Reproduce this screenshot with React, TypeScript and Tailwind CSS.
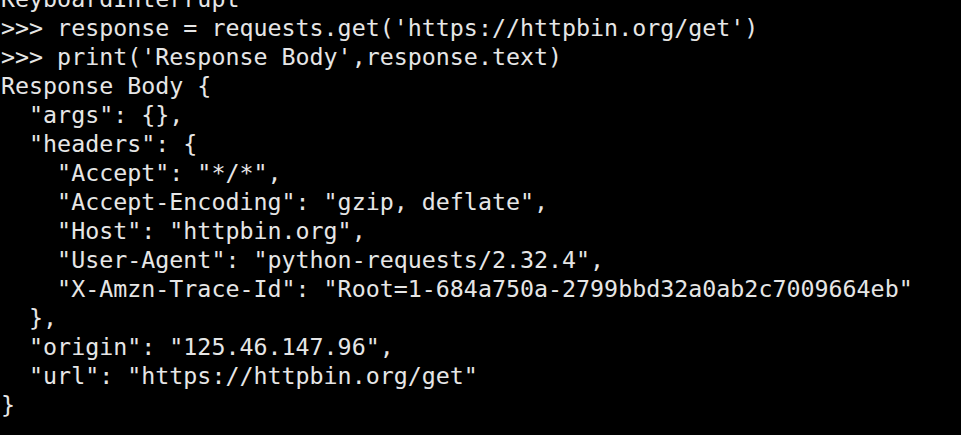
const lines = [
  "KeyboardInterrupt",
  ">>> response = requests.get('https://httpbin.org/get')",
  ">>> print('Response Body',response.text)",
  "Response Body {",
  '  "args": {},',
  '  "headers": {',
  '    "Accept": "*/*",',
  '    "Accept-Encoding": "gzip, deflate",',
  '    "Host": "httpbin.org",',
  '    "User-Agent": "python-requests/2.32.4",',
  '    "X-Amzn-Trace-Id": "Root=1-684a750a-2799bbd32a0ab2c7009664eb"',
  "  },",
  '  "origin": "125.46.147.96",',
  '  "url": "https://httpbin.org/get"',
  "}",
];

export default function App() {
  return (
    <div className="w-[961px] h-[435px] overflow-hidden bg-black">
      <pre className="-mt-[16px] pl-[1px] font-['DejaVu_Sans_Mono',monospace] text-[23.3px] leading-[29px] text-[#e6e6e6] whitespace-pre">
        {lines.join("\n")}
      </pre>
    </div>
  );
}
